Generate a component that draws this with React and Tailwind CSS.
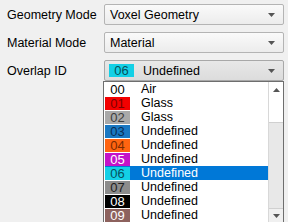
import React from 'react';

const items = [
  { id: '00', name: 'Air', chip: 'bg-white text-black' },
  { id: '01', name: 'Glass', chip: 'bg-[#f20000] text-[#7a0000]' },
  { id: '02', name: 'Glass', chip: 'bg-[#a9a9a9] text-[#3c3c3c]' },
  { id: '03', name: 'Undefined', chip: 'bg-[#1a78c2] text-[#0a2f55]' },
  { id: '04', name: 'Undefined', chip: 'bg-[#ff6410] text-[#7a2a00]' },
  { id: '05', name: 'Undefined', chip: 'bg-[#c413c8] text-white' },
  { id: '06', name: 'Undefined', chip: 'bg-[#13d0e6] text-[#06505c]', selected: true },
  { id: '07', name: 'Undefined', chip: 'bg-[#8c8c8c] text-[#1e1e1e]' },
  { id: '08', name: 'Undefined', chip: 'bg-black text-white' },
  { id: '09', name: 'Undefined', chip: 'bg-[#8d625e] text-white' },
];

const Arrow = ({ up }) => (
  <svg width="7" height="4" viewBox="0 0 7 4" className={up ? 'rotate-180' : ''}>
    <path d="M0 0h7L3.5 4z" fill="#555" />
  </svg>
);

const Combo = ({ children, open }) => (
  <div
    className={`flex-1 h-[21px] flex items-center pl-[5px] pr-[8px] border rounded-[2px] ${
      open
        ? 'border-[#a8a8a8] bg-gradient-to-b from-[#e8e8e8] to-[#dcdcdc]'
        : 'border-[#b4b4b4] bg-gradient-to-b from-[#fafafa] to-[#ececec]'
    }`}
  >
    <div className="flex-1 flex items-center">{children}</div>
    <Arrow />
  </div>
);

const Row = ({ label, children, open }) => (
  <div className="flex items-center">
    <div className="w-[104px] pl-[7px]">{label}</div>
    <Combo open={open}>{children}</Combo>
  </div>
);

export default function App() {
  return (
    <div
      className="w-[288px] h-[222px] bg-[#f0f0f0] text-[12.5px] leading-[14px] text-black overflow-hidden pr-[4px] pt-[4px]"
      style={{ fontFamily: '"Liberation Sans", Arial, sans-serif' }}
    >
      <div className="flex flex-col gap-[7px]">
        <Row label="Geometry Mode">Voxel Geometry</Row>
        <Row label="Material Mode">Material</Row>
        <Row label="Overlap ID" open>
          <span className="w-[25px] h-[13px] leading-[13px] text-[13px] text-center bg-[#13d0e6] text-[#06505c] -ml-[1px] mr-[9px]">06</span>
          Undefined
        </Row>
      </div>

      {/* dropdown list */}
      <div className="ml-[103px] border border-[#6e6e6e] bg-white flex h-[142px]">
        <div className="flex-1 flex flex-col pl-[1px]">
          {items.map((it) => (
            <div
              key={it.id}
              className={`h-[14px] flex items-center ${it.selected ? 'bg-[#0078d7] text-white' : ''}`}
            >
              <span
                className={`w-[25px] h-[13px] leading-[13px] text-center text-[13px] ${it.chip}`}
              >
                {it.id}
              </span>
              <span className="ml-[11px] leading-[14px]">{it.name}</span>
            </div>
          ))}
        </div>
        <div className="w-[15px] border-l border-[#d8d8d8] bg-[#e8e8e8] flex flex-col">
          <div className="h-[15px] bg-white flex items-center justify-center">
            <Arrow up />
          </div>
          <div className="h-[26px] bg-white border-b border-[#d0d0d0]" />
          <div className="flex-1" />
          <div className="h-[14px] flex items-center justify-center border-t border-[#d0d0d0] bg-[#f0f0f0]">
            <Arrow />
          </div>
        </div>
      </div>
    </div>
  );
}
